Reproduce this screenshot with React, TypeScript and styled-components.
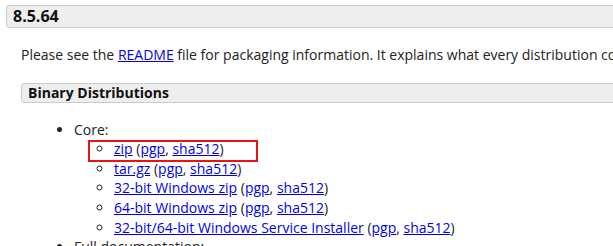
import React from "react";
import styled, { createGlobalStyle } from "styled-components";

const Global = createGlobalStyle`
  html, body { margin: 0; padding: 0; background: #fff; overflow: hidden; }
  body { font-family: "Open Sans", "Liberation Sans", sans-serif; color: #222; font-size: 14px; line-height: 1.4; }
`;

const Page = styled.div`
  width: 1100px;
  padding: 5px 0 0 6px;
`;

const SectionTitle = styled.h3<{ $size?: number; $height?: number }>`
  margin: 0;
  box-sizing: border-box;
  height: ${(p) => p.$height ?? 23}px;
  line-height: ${(p) => (p.$height ?? 23) - 2}px;
  padding-left: 6px;
  background: #eeeeee;
  border: 1px solid #cccccc;
  border-radius: 3px;
  font-size: ${(p) => p.$size ?? 16}px;
  font-weight: 700;
  color: #111;
`;

const SectionBody = styled.div`
  padding-left: 15px;
`;

const Para = styled.p`
  margin: 17px 0 18px 0;
  white-space: nowrap;
`;

const Link = styled.a`
  color: #0000ee;
  text-decoration: underline;
`;

const OuterList = styled.ul`
  margin: 17px 0 0 0;
  padding-left: 53px;
  list-style: disc;
`;

const InnerList = styled.ul`
  margin: 0;
  padding-left: 40px;
  list-style: circle;
`;

const Item = styled.li`
  position: relative;
  white-space: nowrap;
`;

const Highlight = styled.span`
  position: absolute;
  left: -26px;
  top: 1px;
  width: 170px;
  height: 22px;
  box-sizing: border-box;
  border: 2px solid #ee1111;
  pointer-events: none;
`;

const Dl = ({ label, highlight }: { label: string; highlight?: boolean }) => (
  <Item>
    {highlight && <Highlight />}
    <Link href="#">{label}</Link> (<Link href="#">pgp</Link>, <Link href="#">sha512</Link>)
  </Item>
);

export default function App() {
  return (
    <>
      <Global />
      <Page>
        <SectionTitle>8.5.64</SectionTitle>
        <SectionBody>
          <Para>
            Please see the <Link href="#">README</Link> file for packaging information. It explains what every distribution contains.
          </Para>
          <SectionTitle $size={14} $height={20}>Binary Distributions</SectionTitle>
          <OuterList>
            <Item>
              Core:
              <InnerList>
                <Dl label="zip" highlight />
                <Dl label="tar.gz" />
                <Dl label="32-bit Windows zip" />
                <Dl label="64-bit Windows zip" />
                <Dl label="32-bit/64-bit Windows Service Installer" />
              </InnerList>
            </Item>
            <Item>Full documentation:</Item>
          </OuterList>
        </SectionBody>
      </Page>
    </>
  );
}
